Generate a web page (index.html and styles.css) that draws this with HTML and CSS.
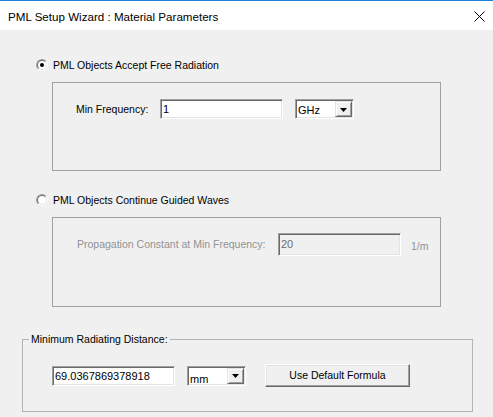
FILE: index.html
```html
<!DOCTYPE html>
<html>
<head>
<meta charset="utf-8">
<link rel="stylesheet" href="styles.css">
</head>
<body>
<div class="window">
  <div class="titlebar">
    <span class="title">PML Setup Wizard : Material Parameters</span>
    <svg class="close" width="11" height="11" viewBox="0 0 11 11"><path d="M0.5 0.5 L10.5 10.5 M10.5 0.5 L0.5 10.5" stroke="#000" stroke-width="1" fill="none"/></svg>
  </div>
  <div class="content">
    <div class="option opt1">
      <span class="radio"><span class="ring"><span class="dot"></span></span></span>
      <span class="opt-text">PML Objects Accept Free Radiation</span>
    </div>
    <div class="group g1">
      <div class="row row1">
        <span class="label lbl-freq">Min Frequency:</span>
        <div class="edit e-freq">1</div>
        <div class="combo c-ghz">
          <span class="combo-text">GHz</span>
          <span class="combo-btn"><svg width="7" height="4" viewBox="0 0 7 4"><polygon points="0,0 7,0 3.5,4" fill="#000"/></svg></span>
        </div>
      </div>
    </div>
    <div class="option opt2">
      <span class="radio"><span class="ring"></span></span>
      <span class="opt-text">PML Objects Continue Guided Waves</span>
    </div>
    <div class="group g2">
      <div class="row row2">
        <span class="label lbl-prop disabled">Propagation Constant at Min Frequency:</span>
        <div class="edit e-prop disabled-edit">20</div>
        <span class="label unit disabled">1/m</span>
      </div>
    </div>
    <fieldset class="frame">
      <legend class="frame-legend">Minimum Radiating Distance:</legend>
      <div class="row row3">
        <div class="edit e-dist">69.0367869378918</div>
        <div class="combo c-mm">
          <span class="combo-text">mm</span>
          <span class="combo-btn"><svg width="7" height="4" viewBox="0 0 7 4"><polygon points="0,0 7,0 3.5,4" fill="#000"/></svg></span>
        </div>
        <div class="button">Use Default Formula</div>
      </div>
    </fieldset>
  </div>
</div>
</body>
</html>
```
FILE: styles.css
```css
html, body {
  margin: 0;
  padding: 0;
}
body {
  width: 493px;
  height: 417px;
  overflow: hidden;
  background: #f0f0f0;
  font-family: "Liberation Sans", Arial, sans-serif;
  font-size: 10.5px;
  color: #000;
}
.window {
  width: 493px;
  height: 417px;
  background: #f0f0f0;
}
.titlebar {
  height: 29px;
  border-top: 1px solid #1a80d8;
  background: #fff;
  display: flex;
  align-items: center;
  justify-content: space-between;
  padding: 0 8px 0 8px;
}
.title {
  font-size: 11.6px;
  color: #000;
  padding-top: 1px;
}
.close {
  display: block;
  margin-right: 0;
  margin-top: 1px;
}
.content {
  display: flex;
  flex-direction: column;
  align-items: flex-start;
}
.option {
  display: flex;
  align-items: center;
  height: 12px;
  margin-left: 36px;
  gap: 5px;
}
.opt1 { margin-top: 29px; }
.opt2 { margin-top: 23px; }
.opt-text {
  line-height: 13px;
  padding-top: 1px;
}
.radio {
  display: block;
  width: 12px;
  height: 12px;
  box-sizing: border-box;
  border-radius: 50%;
  border: 1px solid;
  border-color: #a0a0a0 #ffffff #ffffff #a0a0a0;
}
.ring {
  display: flex;
  align-items: center;
  justify-content: center;
  width: 10px;
  height: 10px;
  box-sizing: border-box;
  border-radius: 50%;
  border: 1px solid;
  border-color: #696969 #e3e3e3 #e3e3e3 #696969;
  background: #fff;
}
.dot {
  display: block;
  width: 4px;
  height: 4px;
  border-radius: 50%;
  background: #000;
}
.group {
  margin-left: 52px;
  width: 389px;
  box-sizing: border-box;
  border: 1px solid #a0a0a0;
}
.g1 {
  margin-top: 11px;
  height: 89px;
  padding: 16px 0 0 23px;
}
.g2 {
  margin-top: 11px;
  height: 90px;
  padding: 15px 0 0 24px;
}
.row {
  display: flex;
  align-items: center;
}
.label {
  line-height: 13px;
  white-space: nowrap;
}
.lbl-freq { width: 84px; }
.lbl-prop { width: 201px; }
.unit { margin-left: 10px; padding-top: 3px; }
.disabled { color: #929292; }
.edit {
  box-sizing: border-box;
  width: 123px;
  height: 20px;
  border: 1px solid;
  border-color: #a0a0a0 #ffffff #ffffff #a0a0a0;
  box-shadow: inset 1px 1px 0 #696969, inset -1px -1px 0 #e3e3e3;
  background: #fff;
  padding: 2px 3px 0 2px;
  line-height: 14px;
  font-size: 11px;
  white-space: nowrap;
  overflow: hidden;
}
.e-prop {
  height: 23px;
  padding-top: 3px;
}
.disabled-edit {
  background: #f0f0f0;
  color: #6d6d6d;
}
.combo {
  box-sizing: border-box;
  width: 59px;
  height: 20px;
  margin-left: 12px;
  border: 1px solid;
  border-color: #a0a0a0 #ffffff #ffffff #a0a0a0;
  box-shadow: inset 1px 1px 0 #696969, inset -1px -1px 0 #e3e3e3;
  background: #fff;
  padding: 1px;
  display: flex;
  align-items: stretch;
}
.combo-text {
  flex: 1;
  padding: 2px 0 0 1px;
  line-height: 14px;
  font-size: 11px;
}
.combo-btn {
  width: 17px;
  box-sizing: border-box;
  background: #f0f0f0;
  border: 1px solid;
  border-color: #e3e3e3 #696969 #696969 #e3e3e3;
  box-shadow: inset 1px 1px 0 #ffffff, inset -1px -1px 0 #a0a0a0;
  display: flex;
  align-items: center;
  justify-content: center;
}
.combo-btn svg { display: block; margin-top: 1px; }
.c-mm .combo-text { padding-top: 4px; }
.frame {
  margin: 26px 0 0 22px;
  padding: 0;
  width: 451px;
  box-sizing: border-box;
  border: 1px solid #b4b4b4;
  min-width: 0;
}
.frame-legend {
  margin-left: 6px;
  padding: 0 2px;
  line-height: 13px;
}
.row3 {
  margin-top: 18px;
  padding-left: 29px;
  height: 23px;
  margin-bottom: 24px;
}
.button {
  box-sizing: border-box;
  width: 145px;
  height: 23px;
  margin-left: 19px;
  background: #f0f0f0;
  border: 1px solid;
  border-color: #ffffff #696969 #696969 #ffffff;
  box-shadow: inset -1px -1px 0 #a0a0a0, inset 1px 1px 0 #e3e3e3;
  display: flex;
  align-items: center;
  justify-content: center;
  line-height: 13px;
  padding-bottom: 1px;
}
```
